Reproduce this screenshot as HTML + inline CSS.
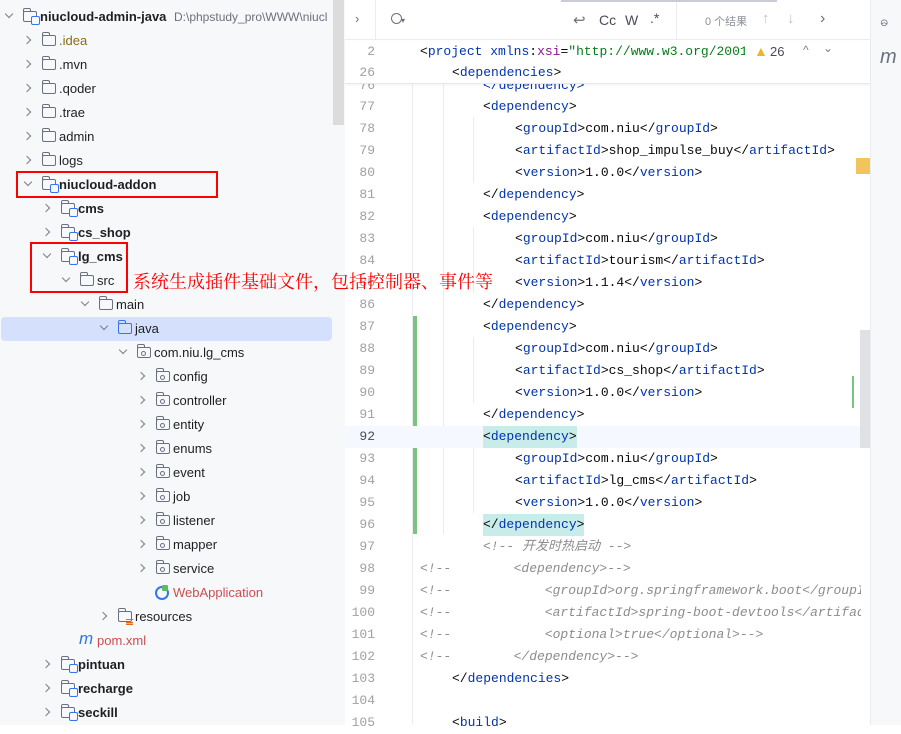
<!DOCTYPE html>
<html><head><meta charset="utf-8">
<style>
*{margin:0;padding:0;box-sizing:border-box}
body{width:901px;height:725px;overflow:hidden;background:#fff;position:relative;font-family:"Liberation Sans","Noto Sans CJK SC",sans-serif}
#tree{position:absolute;left:0;top:0;width:345px;height:725px;background:#f7f8fa}
.r{position:absolute;left:0;height:24px;line-height:24px;font-size:13px;color:#1e1f22;white-space:nowrap}
.chev{position:absolute;top:8px;width:6px;height:6px;border-right:1.3px solid #7a7d85;border-bottom:1.3px solid #7a7d85}
.chev.c{transform:rotate(-45deg)}
.chev.o{transform:rotate(45deg);top:6px}
.fd{position:absolute;top:6px;width:14px;height:11px;border:1.2px solid #6c707e;border-radius:2px}
.fd:before{content:"";position:absolute;left:-1px;top:-4px;width:6px;height:3px;border:1.2px solid #6c707e;border-bottom:none;border-radius:2px 2px 0 0}
.fd.m:after{content:"";position:absolute;right:-4px;bottom:-4px;width:7px;height:7px;border:1.3px solid #3574f0;border-radius:2px;background:#f7f8fa}
.fd.p:after{content:"";position:absolute;left:3px;top:3px;width:3px;height:3px;border:1px solid #6c707e;border-radius:50%}
.fd.b{border-color:#3574f0}.fd.b:before{border-color:#3574f0}
.t{position:absolute;top:0}
.bold{font-weight:bold}
#code{position:absolute;left:345px;top:0;width:525px;height:725px;background:#fff}
.ln{position:absolute;left:345px;width:30px;text-align:right;font-family:"Liberation Mono",monospace;font-size:13px;color:#9ea0a6;height:22px;line-height:22px}
.cl{position:absolute;font-family:"Liberation Mono",monospace;font-size:13px;height:22px;line-height:22px;white-space:pre;color:#080808}
.g{color:#0033b3}.s{color:#067d17}.a{color:#871094}.cm{color:#8c8c8c;font-style:italic}
.hl{background:#c8ecea}
</style></head><body>
<div id="tree">
<div style="position:absolute;left:333px;top:0;width:11px;height:125px;background:#dcdcdc"></div>
<div style="position:absolute;left:1px;top:317px;width:331px;height:24px;background:#d5e1fc;border-radius:4px"></div>

<div class="r" style="top:5px"><i class="chev o" style="left:6px"></i><i class="fd m" style="left:23px"></i><span class="t bold" style="left:40px">niucloud-admin-java</span><span class="t" style="left:174px;color:#6c707e;font-size:12px">D:\phpstudy_pro\WWW\niucl</span></div>
<div class="r" style="top:29px"><i class="chev c" style="left:24px"></i><i class="fd" style="left:42px"></i><span class="t" style="left:59px;color:#8a6a16">.idea</span></div>
<div class="r" style="top:53px"><i class="chev c" style="left:24px"></i><i class="fd" style="left:42px"></i><span class="t" style="left:59px">.mvn</span></div>
<div class="r" style="top:77px"><i class="chev c" style="left:24px"></i><i class="fd" style="left:42px"></i><span class="t" style="left:59px">.qoder</span></div>
<div class="r" style="top:101px"><i class="chev c" style="left:24px"></i><i class="fd" style="left:42px"></i><span class="t" style="left:59px">.trae</span></div>
<div class="r" style="top:125px"><i class="chev c" style="left:24px"></i><i class="fd" style="left:42px"></i><span class="t" style="left:59px">admin</span></div>
<div class="r" style="top:149px"><i class="chev c" style="left:24px"></i><i class="fd" style="left:42px"></i><span class="t" style="left:59px">logs</span></div>
<div class="r" style="top:173px"><i class="chev o" style="left:25px"></i><i class="fd m" style="left:42px"></i><span class="t bold" style="left:59px">niucloud-addon</span></div>
<div class="r" style="top:197px"><i class="chev c" style="left:43px"></i><i class="fd m" style="left:61px"></i><span class="t bold" style="left:78px">cms</span></div>
<div class="r" style="top:221px"><i class="chev c" style="left:43px"></i><i class="fd m" style="left:61px"></i><span class="t bold" style="left:78px">cs_shop</span></div>
<div class="r" style="top:245px"><i class="chev o" style="left:44px"></i><i class="fd m" style="left:61px"></i><span class="t bold" style="left:78px">lg_cms</span></div>
<div class="r" style="top:269px"><i class="chev o" style="left:63px"></i><i class="fd" style="left:80px"></i><span class="t" style="left:97px">src</span></div>
<div class="r" style="top:293px"><i class="chev o" style="left:82px"></i><i class="fd" style="left:99px"></i><span class="t" style="left:116px">main</span></div>
<div class="r" style="top:317px"><i class="chev o" style="left:101px"></i><i class="fd b" style="left:118px"></i><span class="t" style="left:135px">java</span></div>
<div class="r" style="top:341px"><i class="chev o" style="left:120px"></i><i class="fd p" style="left:137px"></i><span class="t" style="left:154px">com.niu.lg_cms</span></div>
<div class="r" style="top:365px"><i class="chev c" style="left:138px"></i><i class="fd p" style="left:156px"></i><span class="t" style="left:173px">config</span></div>
<div class="r" style="top:389px"><i class="chev c" style="left:138px"></i><i class="fd p" style="left:156px"></i><span class="t" style="left:173px">controller</span></div>
<div class="r" style="top:413px"><i class="chev c" style="left:138px"></i><i class="fd p" style="left:156px"></i><span class="t" style="left:173px">entity</span></div>
<div class="r" style="top:437px"><i class="chev c" style="left:138px"></i><i class="fd p" style="left:156px"></i><span class="t" style="left:173px">enums</span></div>
<div class="r" style="top:461px"><i class="chev c" style="left:138px"></i><i class="fd p" style="left:156px"></i><span class="t" style="left:173px">event</span></div>
<div class="r" style="top:485px"><i class="chev c" style="left:138px"></i><i class="fd p" style="left:156px"></i><span class="t" style="left:173px">job</span></div>
<div class="r" style="top:509px"><i class="chev c" style="left:138px"></i><i class="fd p" style="left:156px"></i><span class="t" style="left:173px">listener</span></div>
<div class="r" style="top:533px"><i class="chev c" style="left:138px"></i><i class="fd p" style="left:156px"></i><span class="t" style="left:173px">mapper</span></div>
<div class="r" style="top:557px"><i class="chev c" style="left:138px"></i><i class="fd p" style="left:156px"></i><span class="t" style="left:173px">service</span></div>
<div class="r" style="top:581px"><span style="position:absolute;left:155px;top:5px;width:14px;height:14px;border:2px solid #3574f0;border-radius:50%"></span><span style="position:absolute;left:162px;top:4px;width:6px;height:6px;background:#5fb865;border-radius:1px"></span><span class="t" style="left:173px;color:#c94f4f">WebApplication</span></div>
<div class="r" style="top:605px"><i class="chev c" style="left:100px"></i><i class="fd" style="left:118px"></i><span style="position:absolute;left:126px;top:14px;width:7px;height:6px;border-top:1.5px solid #e66d17;border-bottom:1.5px solid #e66d17;background:linear-gradient(#e66d17,#e66d17) 0 2px/7px 1.5px no-repeat"></span><span class="t" style="left:135px">resources</span></div>
<div class="r" style="top:629px"><span class="t" style="left:79px;color:#3574f0;font-style:italic;font-size:17px;top:-2px">m</span><span class="t" style="left:97px;color:#c94f4f">pom.xml</span></div>
<div class="r" style="top:653px"><i class="chev c" style="left:43px"></i><i class="fd m" style="left:61px"></i><span class="t bold" style="left:78px">pintuan</span></div>
<div class="r" style="top:677px"><i class="chev c" style="left:43px"></i><i class="fd m" style="left:61px"></i><span class="t bold" style="left:78px">recharge</span></div>
<div class="r" style="top:701px"><i class="chev c" style="left:43px"></i><i class="fd m" style="left:61px"></i><span class="t bold" style="left:78px">seckill</span></div>

<div style="position:absolute;left:16px;top:171px;width:202px;height:27px;border:2px solid #f00"></div>
<div style="position:absolute;left:30px;top:242px;width:98px;height:51px;border:2px solid #f00"></div>
</div>

<div id="code"></div>

<!-- toolbar -->
<div style="position:absolute;left:345px;top:0;width:525px;height:40px;border-bottom:1px solid #ebecf0;font-size:13px;color:#6c707e">
<div style="position:absolute;left:30px;top:0;width:1px;height:40px;background:#ebecf0"></div>
<div style="position:absolute;left:331px;top:0;width:1px;height:40px;background:#ebecf0"></div>
<div style="position:absolute;left:216px;top:0;width:216px;height:2px;background:#c9ccd6"></div>
<span style="position:absolute;left:10px;top:11px">›</span>
<span style="position:absolute;left:46px;top:13px;width:11px;height:11px;border:1.5px solid #6c707e;border-radius:50%"></span>
<span style="position:absolute;left:56px;top:16px;font-size:8px">▾</span>
<span style="position:absolute;left:228px;top:11px;font-size:15px">↩</span>
<span style="position:absolute;left:254px;top:12px;font-size:14px;color:#494b57">Cc</span>
<span style="position:absolute;left:280px;top:12px;font-size:14px;color:#494b57">W</span>
<span style="position:absolute;left:305px;top:10px;font-size:14px;color:#494b57">.*</span>
<span style="position:absolute;left:360px;top:13px;font-size:11px;color:#8c8f99">0 个结果</span>
<span style="position:absolute;left:417px;top:10px;font-size:15px;color:#c0c2c8">↑</span>
<span style="position:absolute;left:442px;top:10px;font-size:15px;color:#c0c2c8">↓</span>
<span style="position:absolute;left:475px;top:10px;font-size:16px">›</span>
</div>

<!-- guides and gutter -->
<div style="position:absolute;left:413px;top:316px;width:4px;height:218px;background:#7bc47f"></div>
<div style="position:absolute;left:412px;top:84px;width:1px;height:641px;background:#ebecf0"></div>
<div style="position:absolute;left:443px;top:84px;width:1px;height:450px;background:#ebecf0"></div>
<div style="position:absolute;left:473px;top:117px;width:1px;height:66px;background:#ebecf0"></div>
<div style="position:absolute;left:473px;top:227px;width:1px;height:66px;background:#ebecf0"></div>
<div style="position:absolute;left:473px;top:337px;width:1px;height:66px;background:#ebecf0"></div>
<div style="position:absolute;left:473px;top:447px;width:1px;height:66px;background:#ebecf0"></div>
<div style="position:absolute;left:345px;top:426px;width:515px;height:22px;background:#f5f8fe"></div>
<div style="position:absolute;left:860px;top:330px;width:10px;height:118px;background:#dfe1e5"></div>
<div style="position:absolute;left:852px;top:376px;width:2px;height:32px;background:#7bc47f"></div>
<div style="position:absolute;left:856px;top:158px;width:14px;height:16px;background:#f2c55c"></div>

<div class="ln" style="top:75px">76</div><div class="cl" style="left:483px;top:75px"><span class="g">&lt;/dependency&gt;</span></div>
<div class="ln" style="top:96px">77</div><div class="cl" style="left:483px;top:96px">&lt;<span class="g">dependency</span>&gt;</div>
<div class="ln" style="top:118px">78</div><div class="cl" style="left:515px;top:118px">&lt;<span class="g">groupId</span>&gt;com.niu&lt;/<span class="g">groupId</span>&gt;</div>
<div class="ln" style="top:140px">79</div><div class="cl" style="left:515px;top:140px">&lt;<span class="g">artifactId</span>&gt;shop_impulse_buy&lt;/<span class="g">artifactId</span>&gt;</div>
<div class="ln" style="top:162px">80</div><div class="cl" style="left:515px;top:162px">&lt;<span class="g">version</span>&gt;1.0.0&lt;/<span class="g">version</span>&gt;</div>
<div class="ln" style="top:184px">81</div><div class="cl" style="left:483px;top:184px">&lt;/<span class="g">dependency</span>&gt;</div>
<div class="ln" style="top:206px">82</div><div class="cl" style="left:483px;top:206px">&lt;<span class="g">dependency</span>&gt;</div>
<div class="ln" style="top:228px">83</div><div class="cl" style="left:515px;top:228px">&lt;<span class="g">groupId</span>&gt;com.niu&lt;/<span class="g">groupId</span>&gt;</div>
<div class="ln" style="top:250px">84</div><div class="cl" style="left:515px;top:250px">&lt;<span class="g">artifactId</span>&gt;tourism&lt;/<span class="g">artifactId</span>&gt;</div>
<div class="ln" style="top:272px">85</div><div class="cl" style="left:515px;top:272px">&lt;<span class="g">version</span>&gt;1.1.4&lt;/<span class="g">version</span>&gt;</div>
<div class="ln" style="top:294px">86</div><div class="cl" style="left:483px;top:294px">&lt;/<span class="g">dependency</span>&gt;</div>
<div class="ln" style="top:316px">87</div><div class="cl" style="left:483px;top:316px">&lt;<span class="g">dependency</span>&gt;</div>
<div class="ln" style="top:338px">88</div><div class="cl" style="left:515px;top:338px">&lt;<span class="g">groupId</span>&gt;com.niu&lt;/<span class="g">groupId</span>&gt;</div>
<div class="ln" style="top:360px">89</div><div class="cl" style="left:515px;top:360px">&lt;<span class="g">artifactId</span>&gt;cs_shop&lt;/<span class="g">artifactId</span>&gt;</div>
<div class="ln" style="top:382px">90</div><div class="cl" style="left:515px;top:382px">&lt;<span class="g">version</span>&gt;1.0.0&lt;/<span class="g">version</span>&gt;</div>
<div class="ln" style="top:404px">91</div><div class="cl" style="left:483px;top:404px">&lt;/<span class="g">dependency</span>&gt;</div>
<div class="ln" style="top:426px;color:#4a4c55">92</div><div class="cl hl" style="left:483px;top:426px">&lt;<span class="g">dependency</span>&gt;</div>
<div class="ln" style="top:448px">93</div><div class="cl" style="left:515px;top:448px">&lt;<span class="g">groupId</span>&gt;com.niu&lt;/<span class="g">groupId</span>&gt;</div>
<div class="ln" style="top:470px">94</div><div class="cl" style="left:515px;top:470px">&lt;<span class="g">artifactId</span>&gt;lg_cms&lt;/<span class="g">artifactId</span>&gt;</div>
<div class="ln" style="top:492px">95</div><div class="cl" style="left:515px;top:492px">&lt;<span class="g">version</span>&gt;1.0.0&lt;/<span class="g">version</span>&gt;</div>
<div class="ln" style="top:514px">96</div><div class="cl hl" style="left:483px;top:514px">&lt;/<span class="g">dependency</span>&gt;</div>
<div class="ln" style="top:536px">97</div><div class="cl cm" style="left:483px;top:536px;font-family:'Liberation Mono','Noto Sans CJK SC',monospace">&lt;!-- 开发时热启动 --&gt;</div>
<div class="ln" style="top:558px">98</div><div class="cl cm" style="left:420px;top:558px">&lt;!--        &lt;dependency&gt;--&gt;</div>
<div class="ln" style="top:580px">99</div><div class="cl cm" style="left:420px;top:580px">&lt;!--            &lt;groupId&gt;org.springframework.boot&lt;/groupId&gt;</div>
<div class="ln" style="top:602px">100</div><div class="cl cm" style="left:420px;top:602px">&lt;!--            &lt;artifactId&gt;spring-boot-devtools&lt;/artifactId&gt;</div>
<div class="ln" style="top:624px">101</div><div class="cl cm" style="left:420px;top:624px">&lt;!--            &lt;optional&gt;true&lt;/optional&gt;--&gt;</div>
<div class="ln" style="top:646px">102</div><div class="cl cm" style="left:420px;top:646px">&lt;!--        &lt;/dependency&gt;--&gt;</div>
<div class="ln" style="top:668px">103</div><div class="cl" style="left:452px;top:668px">&lt;/<span class="g">dependencies</span>&gt;</div>
<div class="ln" style="top:690px">104</div>
<div class="ln" style="top:712px">105</div><div class="cl" style="left:452px;top:712px">&lt;<span class="g">build</span>&gt;</div>
<div style="position:absolute;left:861px;top:540px;width:9px;height:185px;background:#fff"></div>

<!-- right strip -->
<div style="position:absolute;left:870px;top:0;width:31px;height:725px;background:#f7f8fa;border-left:1px solid #ebecf0"></div>
<div style="position:absolute;left:880px;top:12px;font-size:14px;color:#6c707e">ဓ</div>
<div style="position:absolute;left:880px;top:46px;font-size:20px;color:#6c707e;font-style:italic">m</div>

<!-- sticky header -->
<div style="position:absolute;left:345px;top:41px;width:525px;height:43px;background:#fff;border-bottom:1px solid #e6e7ea;box-shadow:0 1px 2px rgba(0,0,0,.06)">
<div class="ln" style="left:0;top:0">2</div>
<div class="cl" style="left:75px;top:0">&lt;<span class="g">project</span> <span class="g">xmlns</span>:<span class="a">xsi</span>=<span class="s">"http://www.w3.org/2001/XML</span></div>
<div style="position:absolute;left:400px;top:0;width:125px;height:22px;background:#fff"></div>
<div style="position:absolute;left:409px;top:2px;font-size:14px;color:#f0b429">▲</div>
<div style="position:absolute;left:425px;top:3px;font-size:13px;color:#494b57">26</div>
<div style="position:absolute;left:458px;top:2px;font-size:12px;color:#7a7d85">^</div>
<div style="position:absolute;left:478px;top:0px;font-size:12px;color:#7a7d85">⌄</div>
<div class="ln" style="left:0;top:21px">26</div>
<div class="cl" style="left:107px;top:21px">&lt;<span class="g">dependencies</span>&gt;</div>
</div>

<div style="position:absolute;left:133px;top:269px;font-family:'Noto Serif CJK SC',serif;font-size:18px;color:#f00;white-space:nowrap;line-height:24px">系统生成插件基础文件，包括控制器、事件等</div>
</body></html>
